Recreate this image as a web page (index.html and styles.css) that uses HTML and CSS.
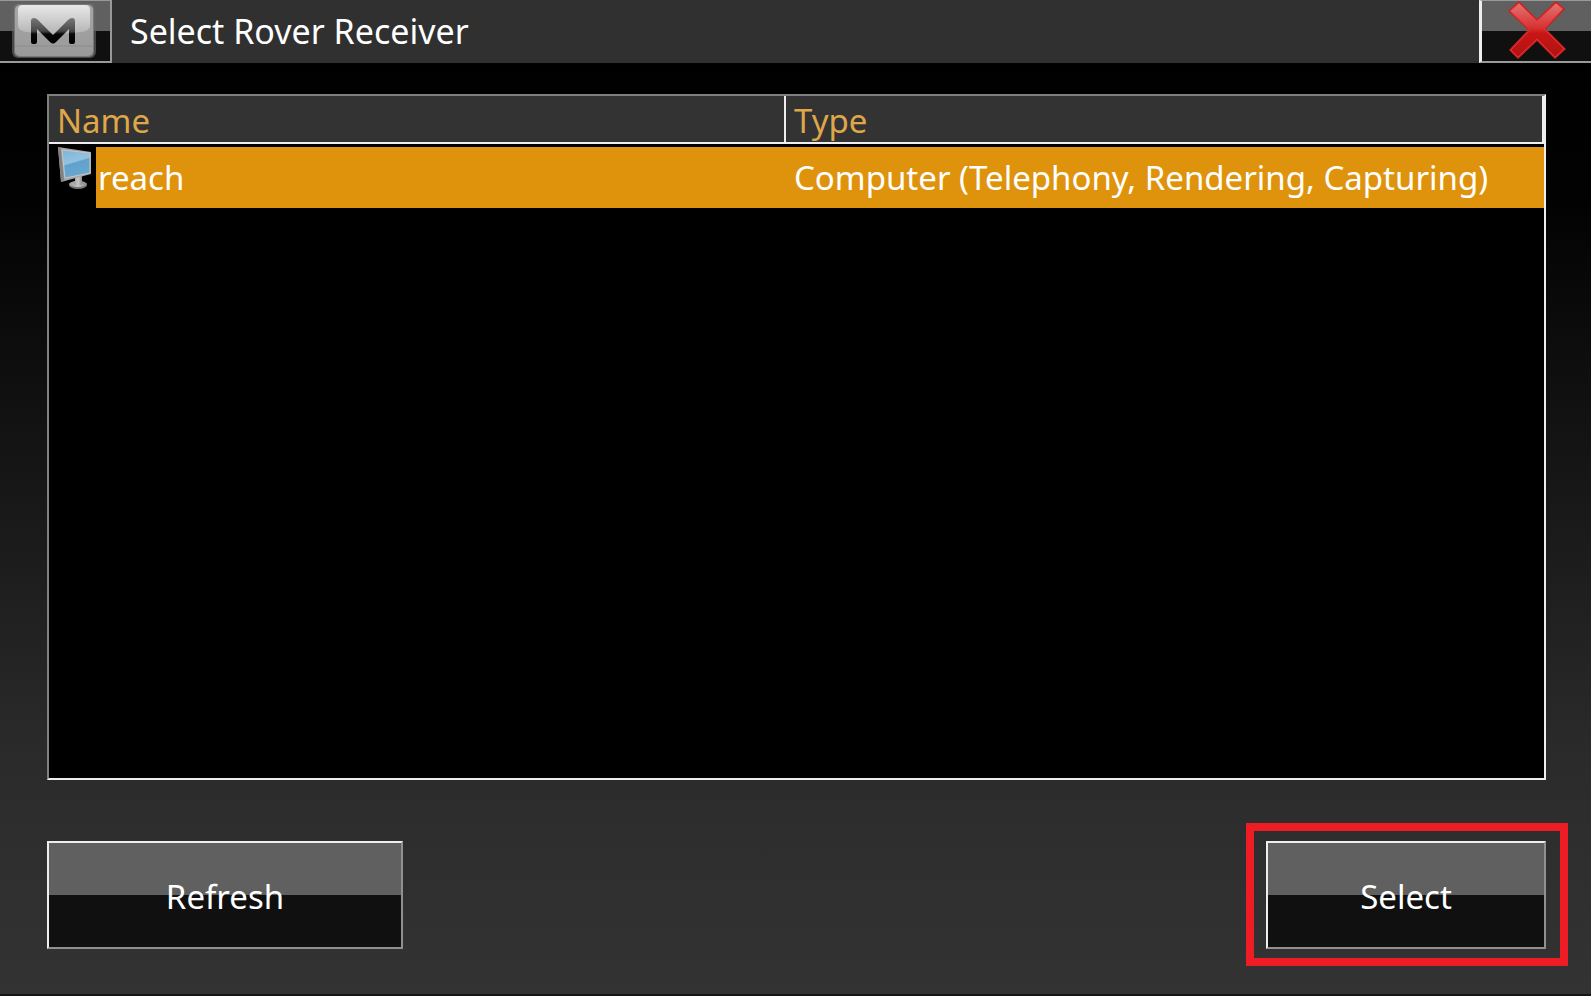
FILE: index.html
```html
<!DOCTYPE html>
<html lang="en">
<head>
<meta charset="utf-8">
<meta name="viewport" content="width=device-width, initial-scale=1">
<title>Select Rover Receiver</title>
<link rel="stylesheet" href="styles.css">
</head>
<body class="screen">
<header class="titlebar">
  <button class="corner-button menu-button" type="button" aria-label="Menu">
    <svg class="menu-icon" viewBox="0 0 86 56" aria-hidden="true">
      <defs>
        <linearGradient id="key" x1="0" y1="0" x2="0" y2="1"><stop offset="0" stop-color="#a8a8aa"/><stop offset="1" stop-color="#999"/></linearGradient>
        <linearGradient id="gloss" x1="0" y1="0" x2="0" y2="1"><stop offset="0" stop-color="#e9e9e9"/><stop offset="1" stop-color="#b4b4b4"/></linearGradient>
        <linearGradient id="mark" gradientUnits="userSpaceOnUse" x1="0" y1="15" x2="0" y2="41"><stop offset="0" stop-color="#777"/><stop offset=".5" stop-color="#484848"/><stop offset=".62" stop-color="#080808"/><stop offset="1" stop-color="#000"/></linearGradient>
      </defs>
      <rect x="1" y="0" width="84" height="55" rx="6" fill="#66666a" opacity=".65"/>
      <rect x="3" y="1" width="80" height="53" rx="5" fill="#77777b"/>
      <rect x="4" y="2" width="78" height="51" rx="5" fill="url(#key)"/>
      <path d="M12 2H74Q79 2 79 7V22Q79 28 70 29Q43 33 16 29Q7 28 7 22V7Q7 2 12 2Z" fill="url(#gloss)"/>
      <path d="M4 43H82" stroke="#8c8c8c"/>
      <path d="M20 39V18Q20 15 23 15Q25 15 27 17L42 32L57 17Q59 15 61 15Q64 15 64 18V39Q64 41 62 41H60Q58 41 58 39V26L45 39Q42 42 39 39L26 26V39Q26 41 24 41H22Q20 41 20 39Z" fill="url(#mark)"/>
    </svg>
  </button>
  <h1 class="title">Select Rover Receiver</h1>
  <button class="corner-button close-button" type="button" aria-label="Close">
    <svg class="close-icon" viewBox="0 0 58 58" aria-hidden="true">
      <defs><linearGradient id="red" x1="0" y1="0" x2="0" y2="1"><stop offset="0" stop-color="#e57373"/><stop offset=".46" stop-color="#d73232"/><stop offset=".56" stop-color="#c91616"/><stop offset="1" stop-color="#b01212"/></linearGradient></defs>
      <path d="M11 0L29 18L48 0L57 8L38 28L58 48L47 58L29 40L10 58L1 49L20 29L0 10Z" fill="#cc2020"/>
      <path d="M11 2L29 20L48 2L55 8L36 28L56 48L47 56L29 38L10 56L3 49L22 29L2 10Z" fill="url(#red)" stroke="#df3434"/>
    </svg>
  </button>
</header>
<main class="content">
  <div class="list">
    <table class="devices">
      <thead><tr><th class="name-col" scope="col">Name</th><th scope="col">Type</th></tr></thead>
      <tbody><tr>
        <td class="name-cell"><div class="name-wrap">
          <svg class="computer-icon" viewBox="0 0 36 44" aria-hidden="true">
            <defs>
              <linearGradient id="glass" x1="0" y1="0" x2=".3" y2="1"><stop offset="0" stop-color="#7db4d8"/><stop offset=".5" stop-color="#93c2df"/><stop offset=".55" stop-color="#61a2cd"/><stop offset="1" stop-color="#66a8d2"/></linearGradient>
              <linearGradient id="metal" x1="0" y1="0" x2="1" y2="0"><stop offset="0" stop-color="#999"/><stop offset=".5" stop-color="#c8c8c8"/><stop offset="1" stop-color="#808080"/></linearGradient>
            </defs>
            <ellipse cx="20" cy="38" rx="9" ry="4" fill="#777"/>
            <ellipse cx="20" cy="37" rx="9" ry="3" fill="url(#metal)"/>
            <path d="M17 29H24V34Q26 36 23 38H17Q14 36 17 34Z" fill="url(#metal)"/>
            <path d="M0 0L33 5V27L3 35Z" fill="#aaa5a5"/>
            <path d="M0 0L3 2L6 33L3 35Z" fill="#858080"/>
            <path d="M4 3L32 6V26L7 31Z" fill="url(#glass)" stroke="#c4c6c8"/>
          </svg>
          <span class="name-text">reach</span>
        </div></td>
        <td class="type-cell">Computer (Telephony, Rendering, Capturing)</td>
      </tr></tbody>
    </table>
  </div>
  <div class="actions">
    <button class="push-button refresh-button" type="button">Refresh</button>
    <div class="highlight"><button class="push-button select-button" type="button">Select</button></div>
  </div>
</main>
</body>
</html>
```
FILE: styles.css
```css
* { box-sizing: border-box; }

.screen {
  display: flex;
  flex-direction: column;
  min-height: 100vh;
  margin: 0;
  border-bottom: 2px solid #151515;
  background: linear-gradient(#000 0%, #020202 20%, #141414 45%, #2b2b2b 76%, #333 100%);
  color: #fff;
  font: 33px/44px "Noto Sans", sans-serif;
}

.titlebar {
  display: flex;
  align-items: stretch;
  height: 63px;
  background: #303030;
}

.title {
  flex: 1;
  margin: 0;
  padding-left: 18px;
  font-size: 34px;
  font-weight: 400;
  line-height: 63px;
}

.corner-button,
.push-button {
  padding: 0;
  background: linear-gradient(#606060 50%, #101010 50%);
  color: #fff;
  font: inherit;
}

.corner-button {
  display: flex;
  width: 112px;
  justify-content: center;
  align-items: center;
  border: 2px solid #999;
}

.menu-button { border-left: 0; border-top-width: 1px; padding-right: 2px; }
.menu-icon { width: 86px; height: 56px; }
.close-button { border-top-width: 1px; border-right: 0; border-left: 3px solid #eee; padding-bottom: 2px; }
.close-icon { width: 58px; height: 58px; }

.content {
  display: flex;
  flex: 1;
  flex-direction: column;
  gap: 43px;
  padding: 31px 23px 28px 47px;
}

.list {
  flex: 1;
  margin-right: 22px;
  border: 2px solid #eee;
  border-top-color: #808080;
  border-left-color: #808080;
  background: #000;
}

.devices {
  width: 100%;
  border-collapse: separate;
  border-spacing: 0;
}

th {
  height: 48px;
  padding: 3px 8px 0;
  border-right: 2px solid #eee;
  border-bottom: 2px solid #eee;
  background: #333;
  color: #dfa64a;
  font-weight: 400;
  line-height: 43px;
  text-align: left;
}

.name-col { width: 737px; }

td {
  padding: 3px 0 0;
  white-space: nowrap;
}

.name-wrap { display: flex; }
.computer-icon { width: 36px; height: 44px; margin: 0 2px 0 9px; }

.name-text {
  flex: 1;
  padding-left: 2px;
  background: #df930c;
  line-height: 61px;
}

.type-cell {
  padding-left: 8px;
  background: linear-gradient(#000 3px, #df930c 3px);
  line-height: 61px;
}

.actions {
  display: flex;
  justify-content: space-between;
  align-items: center;
}

.push-button {
  height: 108px;
  padding-top: 4px;
  border: 2px solid #909090;
  border-top-color: #eee;
  border-left-color: #eee;
}

.refresh-button { width: 356px; }
.select-button { width: 280px; }

.highlight {
  display: flex;
  padding: 10px 14px 9px 12px;
  border: 8px solid #ee1c25;
}
```
